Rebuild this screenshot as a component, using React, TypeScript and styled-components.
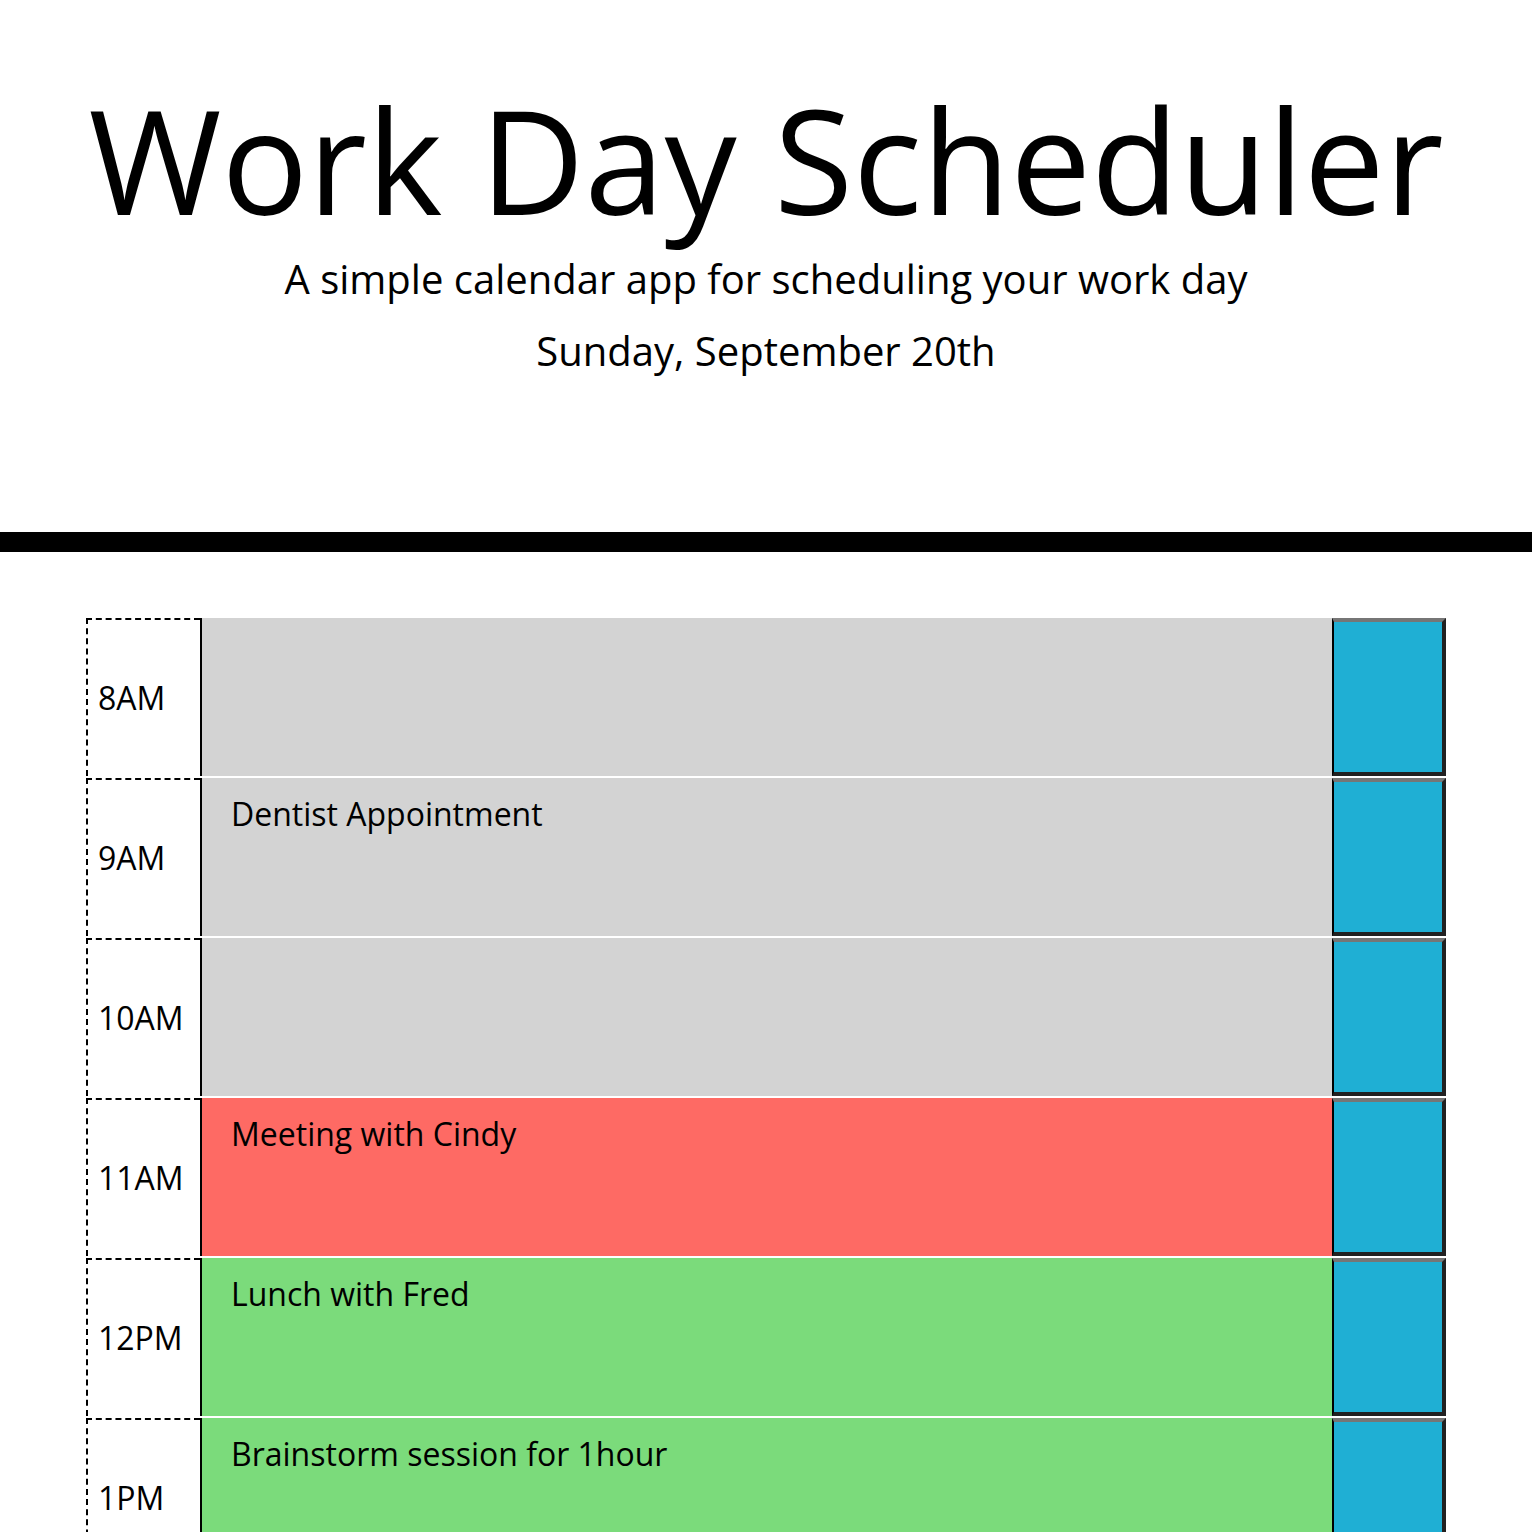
import React from "react";
import styled, { createGlobalStyle } from "styled-components";

const GlobalStyle = createGlobalStyle`
  html, body {
    margin: 0;
    padding: 0;
    background: #ffffff;
    font-family: "Open Sans", "Noto Sans", sans-serif;
    line-height: 1;
    color: #000000;
  }
  * { box-sizing: border-box; }
`;

const Jumbotron = styled.header`
  text-align: center;
  padding: 73px 0 161px;
  border-bottom: 20px solid #000000;
`;

const Title = styled.h1`
  margin: 0;
  height: 173px;
  font-size: 144px;
  font-weight: 400;
  line-height: 1.2;
`;

const Lead = styled.p<{ $gap: number }>`
  margin: ${(p) => p.$gap}px 0 0;
  font-size: 40px;
  line-height: 1;
`;

const Container = styled.main`
  width: 1360px;
  margin: 64px auto 0;
`;

const Row = styled.div`
  display: grid;
  grid-template-columns: 114px 1fr 114px;
  height: 160px;
  border-top: 2px solid #ffffff;
`;

const Hour = styled.div`
  display: flex;
  align-items: center;
  padding-left: 10px;
  border-top: 2px dashed #000000;
  border-left: 2px dashed #000000;
  font-size: 32px;
  background: #ffffff;
`;

type Status = "past" | "present" | "future";

const statusColors: Record<Status, string> = {
  past: "#d3d3d3",
  present: "#fe6a64",
  future: "#7bdb7b",
};

const Entry = styled.textarea<{ $status: Status }>`
  margin: 0;
  border: none;
  border-left: 2px solid #000000;
  border-radius: 0;
  padding: 20px 29px;
  resize: none;
  outline: none;
  background: ${(p) => statusColors[p.$status]};
  color: #000000;
  font-family: "Open Sans", "Noto Sans", sans-serif;
  font-size: 32px;
  line-height: 1;
  height: 100%;
  width: 100%;
`;

const SaveButton = styled.button`
  margin: 0;
  padding: 0;
  height: 100%;
  background: #1fafd4;
  border-style: solid;
  border-width: 4px 4px 4px 2px;
  border-color: #767676 #212121 #212121 #000000;
  border-radius: 0;
  cursor: pointer;
`;

const hours: { label: string; text: string; status: Status }[] = [
  { label: "8AM", text: "", status: "past" },
  { label: "9AM", text: "Dentist Appointment", status: "past" },
  { label: "10AM", text: "", status: "past" },
  { label: "11AM", text: "Meeting with Cindy", status: "present" },
  { label: "12PM", text: "Lunch with Fred", status: "future" },
  { label: "1PM", text: "Brainstorm session for 1hour", status: "future" },
  { label: "2PM", text: "", status: "future" },
  { label: "3PM", text: "", status: "future" },
  { label: "4PM", text: "", status: "future" },
  { label: "5PM", text: "", status: "future" },
];

export default function App() {
  return (
    <>
      <GlobalStyle />
      <Jumbotron>
        <Title>Work Day Scheduler</Title>
        <Lead $gap={13}>A simple calendar app for scheduling your work day</Lead>
        <Lead $gap={32}>Sunday, September 20th</Lead>
      </Jumbotron>
      <Container>
        {hours.map((h) => (
          <Row key={h.label}>
            <Hour>{h.label}</Hour>
            <Entry $status={h.status} defaultValue={h.text} />
            <SaveButton aria-label={`Save ${h.label}`} />
          </Row>
        ))}
      </Container>
    </>
  );
}
